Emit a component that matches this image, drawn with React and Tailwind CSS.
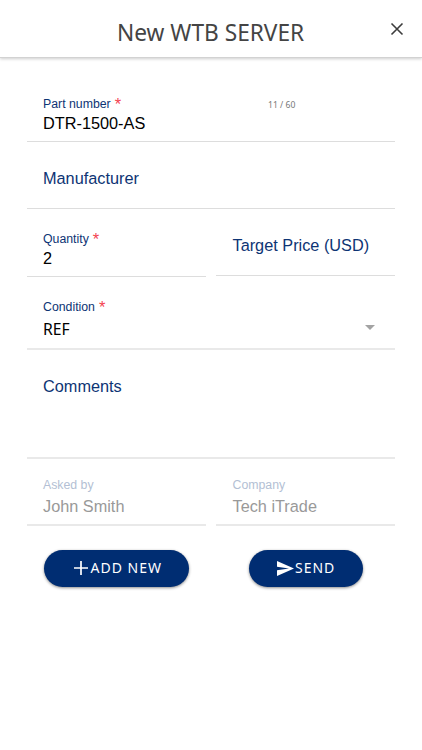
const arial = 'font-["Liberation_Sans",Arial,sans-serif]';

function Label({ children, required, muted }) {
  return (
    <div className={`${arial} flex h-5 items-center whitespace-nowrap text-[12.3px] leading-5 ${muted ? "text-[#b3bfd4]" : "text-[#0d3474]"}`}>
      {children}
      {required && <span className="ml-1 text-[16.5px] leading-5 text-[#f4434f]">*</span>}
    </div>
  );
}

function Field({ className, children }) {
  return <div className={className}>{children}</div>;
}

export default function App() {
  return (
    <div className='h-[750px] w-[422px] overflow-hidden bg-white font-["Noto_Sans","Open_Sans",sans-serif]'>
      <header className="flex h-[58px] justify-between border-b border-[#d2d2d2] shadow-[0_1px_3px_rgba(0,0,0,0.2)]">
        <h1 className="ml-[117px] mt-[17px] h-8 whitespace-nowrap text-[22.7px] leading-8 text-[#444444]">New WTB SERVER</h1>
        <button aria-label="Close" className="mr-[18px] mt-[22px] h-[14px] w-[14px]">
          <svg viewBox="0 0 14 14" className="h-[14px] w-[14px]" fill="none" stroke="#3d3d3d" strokeWidth="1.6">
            <path d="M1.5 1.5 12.5 12.5M12.5 1.5 1.5 12.5" />
          </svg>
        </button>
      </header>

      <main className="ml-[27px] w-[368px]">
        <Field className="flex h-[84px] border-b border-[#dddddd] pl-4 pt-9">
          <div className="w-[225px]">
            <Label required>Part number</Label>
            <div className={`${arial} -mt-px text-[16.3px] leading-5 text-black`}>DTR-1500-AS</div>
          </div>
          <span className="mt-px whitespace-nowrap text-[8.6px] leading-5 text-[#777777]">11 / 60</span>
        </Field>

        <Field className="h-[67px] border-b border-[#dddddd] pl-4 pt-[26px]">
          <div className={`${arial} text-[16.3px] leading-5 text-[#0d3474]`}>Manufacturer</div>
        </Field>

        <div className="flex h-[68px] items-start justify-between">
          <Field className="h-[68px] w-[179px] border-b border-[#dddddd] pl-4 pt-5">
            <Label required>Quantity</Label>
            <div className={`${arial} -mt-px text-[16.3px] leading-5 text-black`}>2</div>
          </Field>
          <Field className="h-[67px] w-[179px] border-b border-[#dddddd] pl-[16.5px] pt-[26px]">
            <div className={`${arial} whitespace-nowrap text-[16.3px] leading-5 text-[#0d3474]`}>Target Price (USD)</div>
          </Field>
        </div>

        <Field className="h-[73px] border-b-2 border-[#e9e9e9] pl-4 pt-5">
          <Label required>Condition</Label>
          <div className="mt-[2px] flex items-center justify-between pr-5">
            <span className="text-[15.7px] leading-5 text-black">REF</span>
            <svg viewBox="0 0 10 5" className="mb-1 h-[5px] w-[10px]" fill="#a3a3a3"><path d="M0 0h10L5 5z" /></svg>
          </div>
        </Field>

        <Field className="h-[109px] border-b-2 border-[#e9e9e9] pl-4 pt-[26px]">
          <div className={`${arial} text-[16.3px] leading-5 text-[#0d3474]`}>Comments</div>
        </Field>

        <div className="flex justify-between">
          <Field className="h-[67px] w-[179px] border-b-2 border-[#e9e9e9] pl-4 pt-4">
            <Label muted>Asked by</Label>
            <div className={`${arial} mt-px text-[16.3px] leading-5 text-[#999999]`}>John Smith</div>
          </Field>
          <Field className="h-[67px] w-[179px] border-b-2 border-[#e9e9e9] pl-[16.5px] pt-4">
            <Label muted>Company</Label>
            <div className={`${arial} mt-px text-[16.3px] leading-5 text-[#999999]`}>Tech iTrade</div>
          </Field>
        </div>

        <div className="mt-6 flex pl-[17px]">
          <button className="flex h-[36.5px] w-[144.5px] items-center rounded-full bg-[#002d72] pl-[30px] text-white shadow-[0_1px_3px_rgba(0,0,0,0.45)]">
            <svg viewBox="0 0 14 14" className="h-[14px] w-[14px]" fill="none" stroke="currentColor" strokeWidth="1.7"><path d="M7 0v14M0 7h14" /></svg>
            <span className="ml-[2.5px] whitespace-nowrap text-[14px] leading-5 tracking-[1px]">ADD NEW</span>
          </button>
          <button className="ml-[60px] flex h-[36.5px] w-[114px] items-center rounded-full bg-[#002d72] pl-[28px] text-white shadow-[0_1px_3px_rgba(0,0,0,0.45)]">
            <svg viewBox="0 0 17 15" className="h-[15px] w-[17px]" fill="currentColor"><path d="M0 0 17 7.5 0 15V9.2L12 7.5 0 5.8z" /></svg>
            <span className="ml-[1.5px] whitespace-nowrap text-[14px] leading-5 tracking-[1px]">SEND</span>
          </button>
        </div>
      </main>
    </div>
  );
}
